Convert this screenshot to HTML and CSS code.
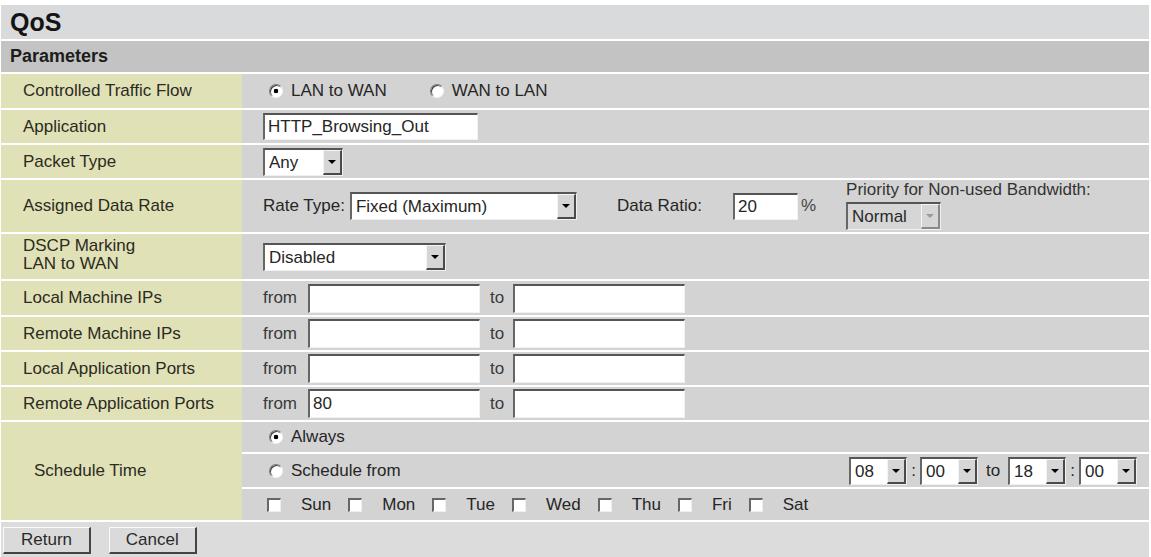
FILE: index.html
```html
<!DOCTYPE html>
<html lang="en">
<head>
  <meta charset="UTF-8" />
  <meta name="viewport" content="width=device-width, initial-scale=1.0" />
  <title>QoS</title>
  <link rel="stylesheet" href="styles.css">
</head>
<body>
  <form class="qos">
    <table class="qos-table">
      <colgroup>
        <col class="col-label">
        <col>
      </colgroup>
      <tr class="h-title"><td colspan="2" class="title">QoS</td></tr>
      <tr class="h-section"><td colspan="2" class="section">Parameters</td></tr>

      <!-- Traffic direction -->
      <tr class="h34">
        <td class="label">Controlled Traffic Flow</td>
        <td class="value">
          <div class="line">
            <label class="opt"><input type="radio" name="flow" checked>LAN to WAN</label>
            <label class="opt opt-next"><input type="radio" name="flow">WAN to LAN</label>
          </div>
        </td>
      </tr>
      <tr class="h33">
        <td class="label">Application</td>
        <td class="value"><input type="text" class="field field-app" value="HTTP_Browsing_Out"></td>
      </tr>
      <tr class="h33">
        <td class="label">Packet Type</td>
        <td class="value">
          <span class="combo w-any"><select><option>Any</option></select><span class="drop"></span></span>
        </td>
      </tr>
      <tr class="h52">
        <td class="label">Assigned Data Rate</td>
        <td class="value">
          <div class="line">
            <span>Rate Type:</span>
            <span class="combo w-rate"><select><option>Fixed (Maximum)</option></select><span class="drop"></span></span>
            <span class="ratio-lbl">Data Ratio:</span>
            <input type="text" class="field field-ratio" value="20">
            <span class="pct">%</span>
            <div class="priority">
              <span class="priority-lbl">Priority for Non-used Bandwidth:</span>
              <span class="combo w-normal is-off"><select disabled><option>Normal</option></select><span class="drop"></span></span>
            </div>
          </div>
        </td>
      </tr>
      <tr class="h45">
        <td class="label label-dscp">DSCP Marking<br>LAN to WAN</td>
        <td class="value">
          <span class="combo w-dscp"><select><option>Disabled</option></select><span class="drop"></span></span>
        </td>
      </tr>

      <!-- Address and port ranges -->
      <tr class="h34">
        <td class="label">Local Machine IPs</td>
        <td class="value">
          <div class="line">
            <span class="from">from</span><input type="text" class="field field-range">
            <span class="to">to</span><input type="text" class="field field-range">
          </div>
        </td>
      </tr>
      <tr class="h33">
        <td class="label">Remote Machine IPs</td>
        <td class="value">
          <div class="line">
            <span class="from">from</span><input type="text" class="field field-range">
            <span class="to">to</span><input type="text" class="field field-range">
          </div>
        </td>
      </tr>
      <tr class="h33">
        <td class="label">Local Application Ports</td>
        <td class="value">
          <div class="line">
            <span class="from">from</span><input type="text" class="field field-range">
            <span class="to">to</span><input type="text" class="field field-range">
          </div>
        </td>
      </tr>
      <tr class="h33">
        <td class="label">Remote Application Ports</td>
        <td class="value">
          <div class="line">
            <span class="from">from</span><input type="text" class="field field-range" value="80">
            <span class="to">to</span><input type="text" class="field field-range">
          </div>
        </td>
      </tr>

      <!-- Schedule -->
      <tr class="h30">
        <td class="label label-sched" rowspan="3">Schedule Time</td>
        <td class="value">
          <div class="line">
            <label class="opt"><input type="radio" name="sched" checked>Always</label>
          </div>
        </td>
      </tr>
      <tr class="h33">
        <td class="value">
          <div class="line line-split">
            <label class="opt"><input type="radio" name="sched">Schedule from</label>
            <div class="times">
              <span class="combo w-time"><select><option>08</option></select><span class="drop"></span></span>
              <span class="sep">:</span>
              <span class="combo w-time"><select><option>00</option></select><span class="drop"></span></span>
              <span class="sep sep-to">to</span>
              <span class="combo w-time"><select><option>18</option></select><span class="drop"></span></span>
              <span class="sep">:</span>
              <span class="combo w-time"><select><option>00</option></select><span class="drop"></span></span>
            </div>
          </div>
        </td>
      </tr>
      <tr class="h31">
        <td class="value">
          <div class="line days">
            <label class="day"><input type="checkbox">Sun</label>
            <label class="day"><input type="checkbox">Mon</label>
            <label class="day"><input type="checkbox">Tue</label>
            <label class="day"><input type="checkbox">Wed</label>
            <label class="day"><input type="checkbox">Thu</label>
            <label class="day"><input type="checkbox">Fri</label>
            <label class="day"><input type="checkbox">Sat</label>
          </div>
        </td>
      </tr>

      <tr class="h-buttons">
        <td colspan="2" class="buttons">
          <button type="button" class="btn">Return</button>
          <button type="button" class="btn">Cancel</button>
        </td>
      </tr>
    </table>
  </form>
</body>
</html>
```

FILE: styles.css
```css
/* QoS parameters page, old router admin look */
body {
  margin: 0;
  background-color: #fff;
  font-family: "Liberation Sans", Arial, sans-serif;
  font-size: 17px;
  color: #262626;
}
.qos-table {
  table-layout: fixed;
  border-collapse: separate;
  border-spacing: 0 2px;
  width: 1148px;
  margin: 3px 0 0 1px;
}
.col-label {
  width: 241px;
}
td {
  padding: 0;
  vertical-align: middle;
}

/* Row heights */
.h-title { height: 34px; }
.h-section { height: 31px; }
.h30 { height: 30px; }
.h31 { height: 31px; }
.h33 { height: 33px; }
.h34 { height: 34px; }
.h45 { height: 45px; }
.h52 { height: 52px; }
.h-buttons { height: 36px; }

/* Headers */
.title {
  background-color: #d8dadb;
  padding-left: 9px;
  font-size: 25px;
  font-weight: bold;
  color: #141414;
}
.section {
  background-color: #c3c3c3;
  padding-left: 9px;
  font-size: 18px;
  font-weight: bold;
  color: #1c1c1c;
}

/* Label and value cells */
.label {
  background-color: #e1e1b7;
  padding-left: 22px;
  color: #2b2b22;
  white-space: nowrap;
}
.label-dscp {
  line-height: 18px;
  padding-bottom: 4px;
}
.label-sched {
  padding-left: 33px;
}
.value {
  background-color: #d3d3d3;
  padding-left: 21px;
}
.line {
  display: flex;
  align-items: center;
}
.line-split {
  justify-content: space-between;
}

/* Text fields */
.field {
  box-sizing: border-box;
  height: 27px;
  padding: 0 3px;
  font-family: inherit;
  font-size: 17px;
  color: #262626;
  background-color: #fff;
  border-style: solid;
  border-width: 2px 1px 1px 2px;
  border-color: #555 #f2f2f2 #f2f2f2 #666;
  border-radius: 0;
  outline: none;
  vertical-align: middle;
}
.field-app {
  width: 215px;
}
.field-ratio {
  width: 65px;
  margin-left: 31px;
}
.field-range {
  width: 172px;
  height: 29px;
}
.from {
  width: 45px;
  color: #3a3a3a;
}
.to {
  width: 23px;
  margin-left: 10px;
  color: #3a3a3a;
}

/* Drop-down boxes */
.combo {
  position: relative;
  display: inline-block;
  vertical-align: middle;
  height: 28px;
}
.combo select {
  -webkit-appearance: none;
  appearance: none;
  box-sizing: border-box;
  width: 100%;
  height: 100%;
  padding: 0 22px 0 4px;
  font-family: inherit;
  font-size: 17px;
  color: #262626;
  background-color: #fff;
  border-style: solid;
  border-width: 2px 1px 1px 2px;
  border-color: #555 #f0f0f0 #f0f0f0 #666;
  border-radius: 0;
  outline: none;
  opacity: 1;
}
.drop {
  position: absolute;
  top: 2px;
  right: 1px;
  bottom: 1px;
  width: 19px;
  box-sizing: border-box;
  background-color: #d6d6d6;
  border-style: solid;
  border-width: 1px 2px 2px 1px;
  border-color: #f4f4f4 #4a4a4a #4a4a4a #f4f4f4;
  pointer-events: none;
}
.drop::after {
  content: "";
  position: absolute;
  left: 50%;
  top: 50%;
  margin: -2px 0 0 -4px;
  border-left: 4px solid transparent;
  border-right: 4px solid transparent;
  border-top: 4px solid #000;
}
.w-any { width: 80px; }
.w-rate { width: 227px; margin-left: 5px; }
.w-dscp { width: 183px; }
.w-normal { width: 95px; }
.w-time { width: 58px; }
.is-off select,
.is-off select:disabled {
  background-color: #d6d6d6;
  color: #2a2a2a;
  opacity: 1;
}
.is-off .drop {
  border-color: #f4f4f4 #8a8a8a #8a8a8a #f4f4f4;
}
.is-off .drop::after {
  border-top-color: #9a9a9a;
}

/* Assigned data rate extras */
.ratio-lbl {
  margin-left: 40px;
}
.pct {
  margin-left: 3px;
  color: #444;
}
.priority {
  display: flex;
  flex-direction: column;
  align-items: flex-start;
  gap: 5px;
  margin-left: 30px;
}
.priority-lbl {
  line-height: 15px;
  color: #333;
}

/* Radios and checkboxes */
.opt {
  display: flex;
  align-items: center;
}
.opt input[type="radio"] {
  -webkit-appearance: none;
  appearance: none;
  width: 14px;
  height: 14px;
  margin: 0 8px 0 6px;
  border-radius: 50%;
  background-color: #fff;
  border: 1px solid;
  border-color: #7a7a7a #f4f4f4 #f4f4f4 #7a7a7a;
  box-shadow: inset 1px 1px 0 #3c3c3c;
}
.opt input[type="radio"]:checked {
  background: radial-gradient(circle, #000 0 2px, #fff 2.6px);
}
.opt-next {
  margin-left: 37px;
}
.day {
  display: flex;
  align-items: center;
  margin-right: 17px;
}
.day input[type="checkbox"] {
  -webkit-appearance: none;
  appearance: none;
  box-sizing: border-box;
  width: 14px;
  height: 14px;
  margin: 0 20px 0 0;
  background-color: #fff;
  border-style: solid;
  border-width: 2px 1px 1px 2px;
  border-color: #666 #eee #eee #666;
  border-radius: 0;
}
.days {
  padding-left: 4px;
}

/* Schedule time selectors */
.times {
  display: flex;
  align-items: center;
  padding-right: 12px;
}
.sep {
  width: 13px;
  text-align: center;
}
.sep-to {
  width: 30px;
}

/* Bottom buttons */
.buttons {
  background-color: #dcdcdc;
  padding-left: 2px;
}
.btn {
  height: 27px;
  width: 88px;
  margin-right: 13px;
  font-family: inherit;
  font-size: 17px;
  color: #2a2a2a;
  background-color: #dadada;
  border-style: solid;
  border-width: 1px 2px 2px 1px;
  border-color: #fafafa #444 #444 #fafafa;
  border-radius: 0;
}
```
